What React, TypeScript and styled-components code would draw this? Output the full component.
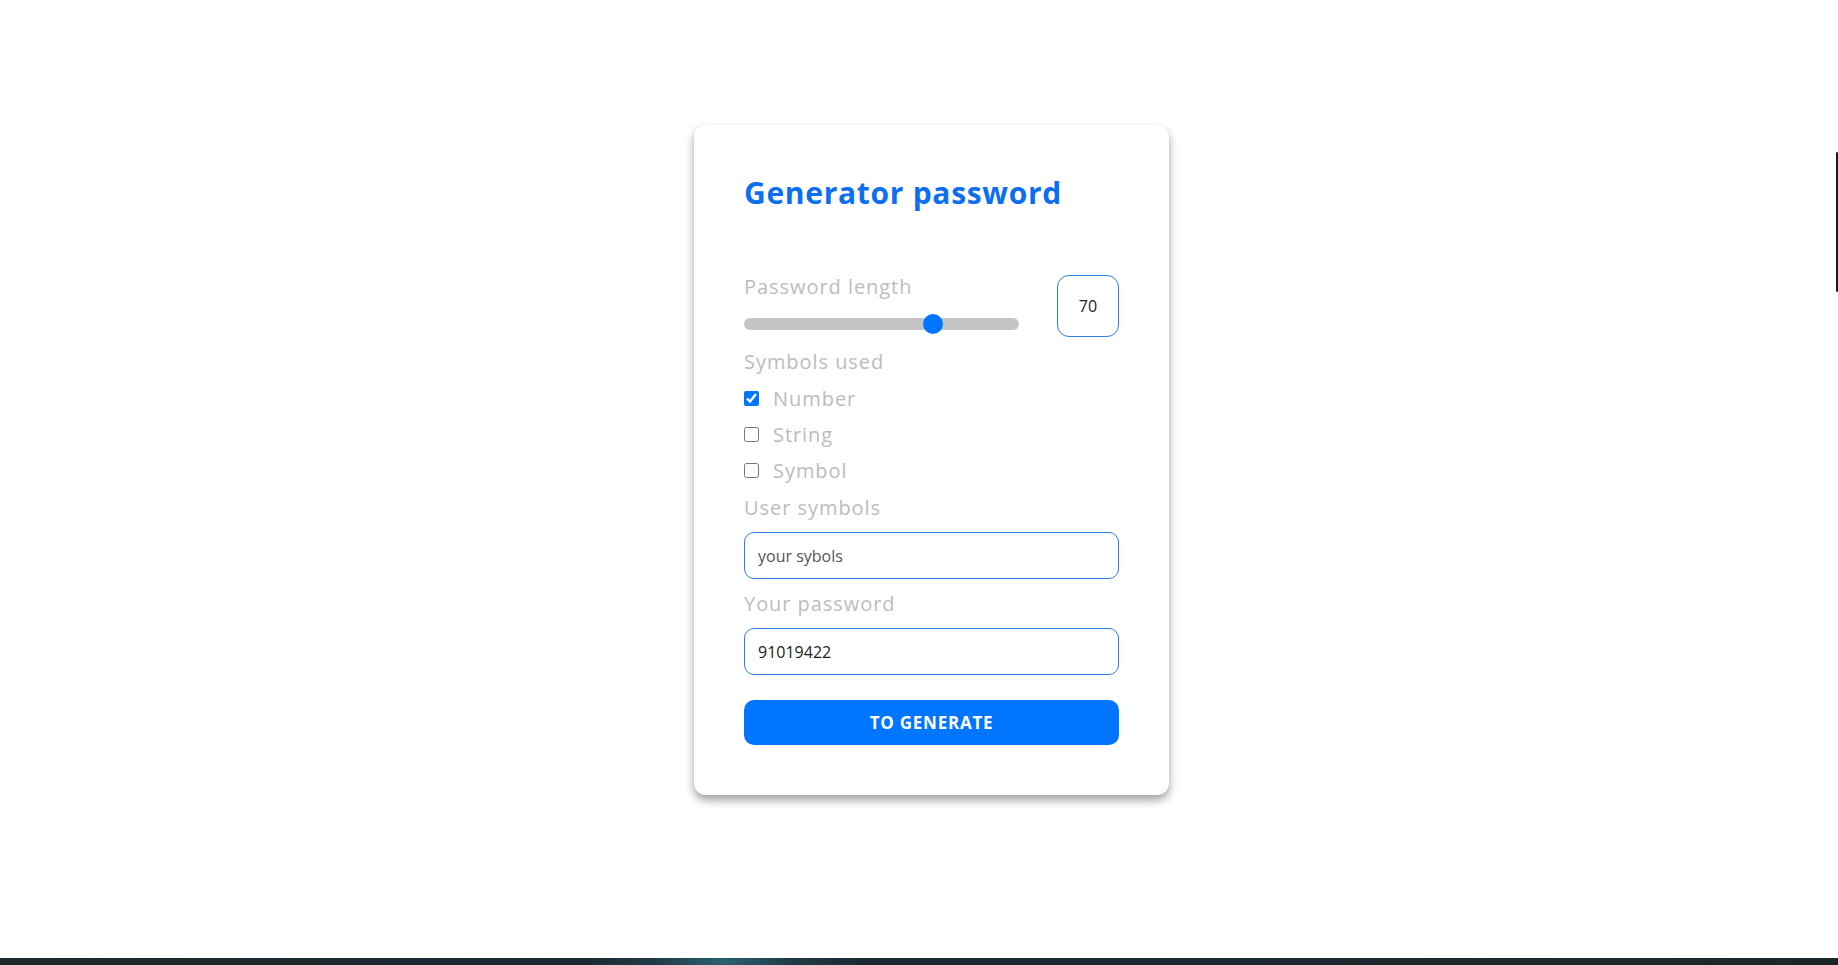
import React, { useState } from "react";
import styled, { createGlobalStyle } from "styled-components";

const GlobalStyle = createGlobalStyle`
  html, body {
    margin: 0;
    padding: 0;
    background: #ffffff;
    font-family: "Open Sans", "Liberation Sans", sans-serif;
  }
  * { box-sizing: border-box; }
`;

const Page = styled.main`
  min-height: 965px;
  display: flex;
  justify-content: center;
  align-items: flex-start;
  padding: 125px 0 0 25px;
`;

const Card = styled.section`
  width: 475px;
  background: #fff;
  border-radius: 12px;
  padding: 50px;
  box-shadow: 0 5px 10px rgba(0, 0, 0, 0.38);
  display: flex;
  flex-direction: column;
`;

const Title = styled.h1`
  margin: 0 0 64px;
  font-size: 30px;
  line-height: 36px;
  font-weight: 700;
  color: #0b6ff0;
  letter-spacing: 0.7px;
`;

const LengthRow = styled.div`
  display: flex;
  justify-content: space-between;
  align-items: flex-start;
  height: 62px;
  margin-bottom: 13px;
`;

const LengthCol = styled.div`
  display: flex;
  flex-direction: column;
  gap: 15px;
  width: 275px;
`;

const Label = styled.div<{ $mb?: number }>`
  font-size: 20px;
  line-height: 24px;
  color: #bcbcbc;
  letter-spacing: 0.95px;
  margin-bottom: ${(p) => p.$mb ?? 0}px;
`;

const Range = styled.input`
  -webkit-appearance: none;
  appearance: none;
  width: 275px;
  height: 20px;
  margin: 0;
  background: transparent;
  &::-webkit-slider-runnable-track {
    height: 12px;
    border-radius: 6px;
    background: #c4c4c4;
  }
  &::-webkit-slider-thumb {
    -webkit-appearance: none;
    appearance: none;
    width: 20px;
    height: 20px;
    border-radius: 50%;
    background: #0075ff;
    margin-top: -4px;
    border: none;
  }
`;

const LengthBox = styled.div`
  width: 62px;
  height: 62px;
  border: 1px solid #2a7de1;
  border-radius: 12px;
  display: flex;
  align-items: center;
  justify-content: center;
  font-size: 16px;
  color: #222;
`;

const Checks = styled.div`
  display: flex;
  flex-direction: column;
  gap: 12px;
  margin: 12px 0 14px;
`;

const CheckRow = styled.label`
  display: flex;
  align-items: center;
  height: 24px;
  gap: 14px;
  font-size: 20px;
  color: #bcbcbc;
  letter-spacing: 0.95px;
`;

const Check = styled.input`
  width: 15px;
  height: 15px;
  margin: 0;
  accent-color: #0075ff;
`;

const TextField = styled.input<{ $dark?: boolean }>`
  width: 100%;
  height: 47px;
  border: 1px solid #2a7de1;
  border-radius: 10px;
  padding: 0 13px;
  font-family: "Open Sans", "Liberation Sans", sans-serif;
  font-size: 16px;
  color: ${(p) => (p.$dark ? "#1c1c1c" : "#555")};
  outline: none;
  margin-bottom: 13px;
  &::placeholder { color: #555; }
`;

const Button = styled.button`
  margin-top: 12px;
  width: 100%;
  height: 45px;
  border: none;
  border-radius: 10px;
  background: #0075ff;
  color: #fff;
  font-family: "Open Sans", "Liberation Sans", sans-serif;
  font-weight: 700;
  font-size: 17px;
  letter-spacing: 0.75px;
  cursor: pointer;
`;

const EdgeBar = styled.div`
  position: fixed;
  right: 0;
  top: 152px;
  width: 2px;
  height: 140px;
  border-radius: 2px;
  background: #1a1a1a;
`;

const BottomStrip = styled.div`
  position: fixed;
  left: 0;
  right: 0;
  bottom: 0;
  height: 7px;
  background: radial-gradient(ellipse 140px 20px at 723px 50%, #2b6475 0%, #1f3a45 50%, rgba(30, 40, 46, 0) 100%),
    linear-gradient(90deg, #1c272d, #1d2a31 40%, #1b262c);
`;

export default function App() {
  const [len, setLen] = useState(70);
  const [num, setNum] = useState(true);
  const [str, setStr] = useState(false);
  const [sym, setSym] = useState(false);
  return (
    <>
      <GlobalStyle />
      <Page>
        <Card>
          <Title>Generator password</Title>
          <LengthRow>
            <LengthCol>
              <Label>Password length</Label>
              <Range
                type="range"
                min={0}
                max={100}
                value={len}
                onChange={(e) => setLen(Number(e.target.value))}
              />
            </LengthCol>
            <LengthBox>{len}</LengthBox>
          </LengthRow>
          <Label>Symbols used</Label>
          <Checks>
            <CheckRow>
              <Check type="checkbox" checked={num} onChange={() => setNum(!num)} />
              Number
            </CheckRow>
            <CheckRow>
              <Check type="checkbox" checked={str} onChange={() => setStr(!str)} />
              String
            </CheckRow>
            <CheckRow>
              <Check type="checkbox" checked={sym} onChange={() => setSym(!sym)} />
              Symbol
            </CheckRow>
          </Checks>
          <Label $mb={12}>User symbols</Label>
          <TextField placeholder="your sybols" />
          <Label $mb={12}>Your password</Label>
          <TextField $dark readOnly value="91019422" />
          <Button>TO GENERATE</Button>
        </Card>
      </Page>
      <EdgeBar />
      <BottomStrip />
    </>
  );
}
